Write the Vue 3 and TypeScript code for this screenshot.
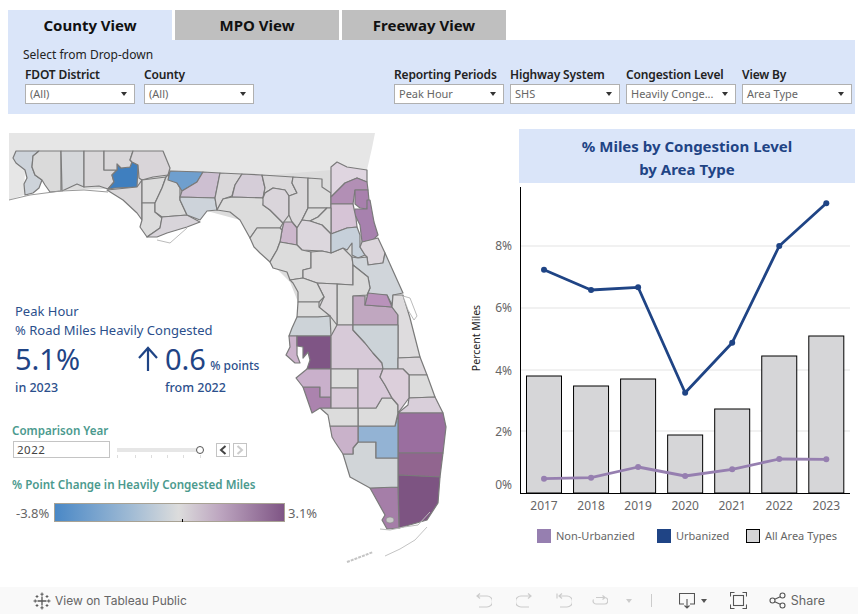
<script setup lang="ts">
import { computed } from "vue"

interface County {
  fill: string
  pts: string
}

const tabs = ["County View", "MPO View", "Freeway View"]
const leftFilters = [
  { label: "FDOT District", value: "(All)" },
  { label: "County", value: "(All)" },
]
const rightFilters = [
  { label: "Reporting Periods", value: "Peak Hour" },
  { label: "Highway System", value: "SHS" },
  { label: "Congestion Level", value: "Heavily Conge..." },
  { label: "View By", value: "Area Type" },
]

// page coordinates, read off the reference
const counties: County[] = [
  { fill: "#cdd3da", pts: "16,151 39,151 33,156 32,167 35,175 42,180 39,188 33,193 25,195 24,184 27,178 25,170 16,163 13,158" },
  { fill: "#dadada", pts: "39,151 61,151 61,191 50,192 45,185 42,180 35,175 32,167 33,156" },
  { fill: "#d5d7da", pts: "61,151 84,151 84,187 77,184 62,191" },
  { fill: "#d9d7d9", pts: "84,151 104,151 104,170 117,170 112,175 114,182 108,189 99,186 84,187" },
  { fill: "#3f7fbf", pts: "117,164 121,168 130,167 132,162 138,165 137,187 115,188 108,189 114,182 112,175 117,170" },
  { fill: "#d9d7d9", pts: "104,151 133,151 130,160 132,162 130,167 121,168 117,164 117,170 104,170" },
  { fill: "#d9d5d9", pts: "133,151 163,151 170,168 168,175 153,177 142,180 139,178 138,165 132,162 130,160" },
  { fill: "#dad8da", pts: "107,190 137,187 142,180 142,203 142,220 137,213 123,200" },
  { fill: "#dcdcdc", pts: "142,180 166,177 162,188 155,203 142,203" },
  { fill: "#dcdcdc", pts: "142,203 155,203 155,212 162,218 160,228 147,237 140,227 142,220" },
  { fill: "#dadada", pts: "166,177 168,175 177,183 180,188 180,200 187,215 162,217 155,212 155,203 162,188" },
  { fill: "#d8d4da", pts: "162,217 187,215 200,222 187,227 167,233 157,237 147,237 160,228" },
  { fill: "#6f9fce", pts: "170,171 203,172 197,182 182,191 177,183 168,180" },
  { fill: "#cdbfd1", pts: "203,172 220,173 217,188 215,198 180,197 182,191 197,182" },
  { fill: "#cdd3da", pts: "180,197 215,198 217,210 207,211 200,220 187,215 180,200" },
  { fill: "#dad8da", pts: "220,173 242,174 235,185 232,196 223,199 217,210 215,198 217,188" },
  { fill: "#d5cdd8", pts: "242,174 262,175 265,188 263,198 232,197 235,185" },
  { fill: "#dcdcdc", pts: "223,199 232,197 263,198 264,200 263,205 270,210 283,223 280,228 257,228 250,238 240,220 230,212 217,210" },
  { fill: "#dad8da", pts: "262,175 293,177 292,183 297,193 289,196 285,190 273,188 265,193 263,198 265,188" },
  { fill: "#dad5db", pts: "265,193 273,188 285,190 289,196 289,215 283,223 270,210 263,205 263,198" },
  { fill: "#dad8da", pts: "293,177 308,178 308,208 302,220 297,228 292,222 289,215 289,196 297,193 292,183" },
  { fill: "#dcdcdc", pts: "308,178 322,179 322,187 331,193 331,208 308,208" },
  { fill: "#dfd5e0", pts: "331,167 337,162 347,167 367,170 367,182 357,178 345,183 331,197" },
  { fill: "#b28fb5", pts: "331,197 345,183 357,178 367,182 368,190 355,190 353,204 331,204" },
  { fill: "#a880ad", pts: "355,190 368,190 369,200 367,209 360,208 355,204" },
  { fill: "#a781ae", pts: "355,209 367,209 367,200 370,200 374,222 378,235 373,240 362,242 360,225 354,213" },
  { fill: "#d6c4d6", pts: "331,204 353,204 356,218 357,227 347,228 331,234" },
  { fill: "#dcdcdc", pts: "302,220 308,208 327,208 318,217 310,221" },
  { fill: "#dcdcdc", pts: "310,221 318,217 327,208 331,208 331,234 322,225 313,222" },
  { fill: "#ccb7cc", pts: "284,222 292,222 297,228 297,245 280,242 282,230" },
  { fill: "#dcd7dd", pts: "297,228 302,220 310,221 322,225 331,234 331,253 322,251 302,250 297,245" },
  { fill: "#dcdcdc", pts: "250,238 257,228 280,228 282,230 280,242 277,250 270,262 260,253 254,247" },
  { fill: "#dcdcdc", pts: "280,242 297,245 302,250 311,252 311,268 303,270 303,278 290,280 287,272 273,268 270,262 277,250" },
  { fill: "#dcdadc", pts: "311,252 322,251 331,253 343,248 352,257 353,265 353,285 337,284 317,283 303,278 303,270 311,268" },
  { fill: "#c6d0da", pts: "331,234 347,228 357,227 360,235 360,247 365,255 358,258 352,255 352,243 347,250 343,248 331,253" },
  { fill: "#dcd6dc", pts: "362,242 378,238 385,253 383,263 368,265 367,257 365,255 360,247" },
  { fill: "#d0d5da", pts: "358,258 367,257 368,265 383,263 385,253 403,293 393,295 392,305 387,295 367,295 370,288 368,277 353,265 352,257" },
  { fill: "#dadada", pts: "337,284 353,285 353,265 368,277 370,288 367,295 353,296 353,325 337,325" },
  { fill: "#dcd9dc", pts: "317,283 337,284 337,325 330,316 319,308 324,297" },
  { fill: "#dcdcdc", pts: "290,280 303,278 317,283 324,297 319,302 298,302 298,292 293,283" },
  { fill: "#dcdcdc", pts: "298,302 319,302 319,307 330,316 318,317 297,317" },
  { fill: "#cdd3d8", pts: "297,317 318,317 330,316 331,336 289,336 292,328" },
  { fill: "#c0a7c0", pts: "353,296 365,296 365,305 392,307 398,315 398,325 353,325" },
  { fill: "#b992bb", pts: "365,305 368,293 387,295 392,307" },
  { fill: "#dedcde", pts: "393,295 403,295 410,318 420,357 398,358 398,315 392,307" },
  { fill: "#ccb3cc", pts: "289,336 297,336 297,355 300,363 295,363 286,355 290,347" },
  { fill: "#7f5585", pts: "297,336 331,336 331,369 307,369 310,360 308,352 303,358 303,347 297,346" },
  { fill: "#d7cad8", pts: "331,336 337,325 353,325 353,330 365,343 373,353 382,363 383,369 331,369" },
  { fill: "#ccd3d8", pts: "353,325 398,325 398,369 383,369 382,363 373,353 365,343 353,330" },
  { fill: "#dcd7dc", pts: "398,358 420,357 427,375 409,375 403,369 398,369" },
  { fill: "#dcdcdc", pts: "409,375 427,375 435,397 409,398" },
  { fill: "#d9cfda", pts: "409,398 435,397 443,413 398,413 408,405" },
  { fill: "#9a6e9f", pts: "398,413 443,413 446,427 443,453 398,453" },
  { fill: "#91658f", pts: "398,453 443,453 440,477 398,475" },
  { fill: "#7d5482", pts: "398,475 440,477 438,503 427,520 399,528" },
  { fill: "#a57ea8", pts: "370,488 398,487 399,528 387,529 382,520 385,515" },
  { fill: "#d1d5d8", pts: "343,454 353,454 353,448 358,442 376,442 376,458 398,458 398,487 370,488 350,477" },
  { fill: "#93b3d4", pts: "358,426 395,426 398,413 398,458 376,458 376,442 358,442" },
  { fill: "#dcdcdc", pts: "358,408 376,408 382,398 392,398 398,405 398,413 395,426 358,426" },
  { fill: "#c9b2ca", pts: "330,426 358,426 358,442 353,448 353,454 343,454 335,442 332,437" },
  { fill: "#dcdcdc", pts: "320,408 358,408 358,426 330,426 328,415" },
  { fill: "#ab83ae", pts: "303,387 320,387 320,397 331,397 331,408 320,408 312,413" },
  { fill: "#c9b0cb", pts: "296,378 307,369 331,369 331,397 320,397 320,387 303,387" },
  { fill: "#dcdcdc", pts: "331,369 358,369 358,388 331,388" },
  { fill: "#d8cad8", pts: "331,388 358,388 358,408 331,408" },
  { fill: "#d8c9d9", pts: "358,369 383,369 380,377 385,385 392,398 382,398 376,408 358,408" },
  { fill: "#dccfdb", pts: "383,369 403,369 409,375 409,398 398,413 398,405 392,398 385,385 380,377" },
]

const chartYears = [2017, 2018, 2019, 2020, 2021, 2022, 2023]
const yAxis = [
  { label: "8%", grid: 246, text: 246 },
  { label: "6%", grid: 308, text: 308 },
  { label: "4%", grid: 370, text: 371 },
  { label: "2%", grid: 431, text: 432 },
  { label: "0%", grid: 0, text: 485 },
]
const barTops = [376, 386, 379, 435, 409, 356, 336]
const urbanY = [269.7, 290, 287.3, 392.7, 342.7, 246, 203.3]
const nonUrbanY = [478.7, 477.7, 467, 476, 469.3, 459, 459.3]

const barX = (i: number) => 526.5 + i * 47.05
const pointX = (i: number) => 544 + i * 47.05

const urbanPts = computed(() => urbanY.map((y, i) => `${pointX(i)},${y}`).join(" "))
const nonUrbanPts = computed(() => nonUrbanY.map((y, i) => `${pointX(i)},${y}`).join(" "))

const sliderTicks = [0, 18, 34, 50, 66, 83]
</script>

<template>
  <div class="page">
    <div class="tabs">
      <div v-for="(t, i) in tabs" :key="t" class="tab" :class="{ active: i === 0 }">{{ t }}</div>
    </div>

    <div class="filters">
      <div class="select-hint">Select from Drop-down</div>
      <div class="filter-row">
        <div class="filter-group">
          <div v-for="f in leftFilters" :key="f.label" class="filter">
            <div class="filter-label">{{ f.label }}</div>
            <div class="select">
              <span>{{ f.value }}</span><i class="caret"></i>
            </div>
          </div>
        </div>
        <div class="filter-group narrow">
          <div v-for="f in rightFilters" :key="f.label" class="filter">
            <div class="filter-label">{{ f.label }}</div>
            <div class="select">
              <span>{{ f.value }}</span><i class="caret"></i>
            </div>
          </div>
        </div>
      </div>
    </div>

    <div class="body">
      <div class="left">
        <svg class="map" width="470" height="450" viewBox="0 120 470 450">
          <polygon
            points="9,133 375,133 372,148 367,170 332,195 250,176 170,171 163,151 16,151 13,158 25,170 24,195 9,200"
            fill="#e6e6e6"
          />
          <polygon
            points="61,152 163,152 170,170 256,176 332,170 360,240 395,300 398,470 345,452 335,440 331,410 331,340 298,302 290,282 270,262 256,240 240,220 207,211 187,215 160,228 142,210 123,198 107,189 61,190"
            fill="#dcdcdc"
          />
          <polygon
            v-for="(c, i) in counties"
            :key="i"
            :points="c.pts"
            :fill="c.fill"
            stroke="#7a7a7a"
            stroke-width="1.2"
            stroke-linejoin="round"
          />
          <polyline points="9,200 30,195 61,191 84,190 108,192" fill="none" stroke="#999" stroke-width="1" />
          <polygon points="403,296 410,298 417,316 414,320 408,310" fill="#fff" stroke="#aaa" stroke-width="0.8" />
          <polyline points="157,240 170,243 187,228" fill="none" stroke="#bbb" stroke-width="1" />
          <polyline points="380,529 390,530 404,527 418,525 430,512" fill="none" stroke="#bbb" stroke-width="1" />
          <polyline points="385,556 400,549 415,540 427,527" fill="none" stroke="#c4c4c4" stroke-width="1" />
          <polyline points="347,562 355,559 368,554 373,552" fill="none" stroke="#c4c4c4" stroke-width="2" stroke-dasharray="3 1" />
          <ellipse cx="390" cy="520" rx="4" ry="3" fill="#c8c8c8" stroke="#888" stroke-width="0.6" />
        </svg>

        <div class="kpi-title">
          <div>Peak Hour</div>
          <div>% Road Miles Heavily Congested</div>
        </div>
        <div class="kpi-row">
          <div class="kpi-current">
            <div class="kpi-num">5.1%</div>
            <div class="kpi-sub">in 2023</div>
          </div>
          <svg class="kpi-arrow" width="24" height="26" viewBox="0 0 24 26">
            <path d="M12 25V2M3 12 12 2l9 10" fill="none" stroke="#1f4485" stroke-width="2.2" />
          </svg>
          <div class="kpi-change">
            <div><span class="kpi-num">0.6</span> <span class="kpi-unit">% points</span></div>
            <div class="kpi-sub">from 2022</div>
          </div>
        </div>

        <div class="teal-title year-title">Comparison Year</div>
        <div class="year-row">
          <div class="year-select">2022</div>
          <div class="slider">
            <div class="track"></div>
            <div class="knob"></div>
            <i v-for="t in sliderTicks" :key="t" class="tick" :style="{ left: t + 'px' }"></i>
          </div>
          <div class="step">
            <svg width="8" height="10" viewBox="0 0 8 10"><path d="M6.5 1 2 5l4.500 4" fill="none" stroke="#444" stroke-width="2" /></svg>
          </div>
          <div class="step off">
            <svg width="8" height="10" viewBox="0 0 8 10"><path d="M1.500 1 6 5 1.500 9" fill="none" stroke="#ccc" stroke-width="2" /></svg>
          </div>
        </div>

        <div class="teal-title legend-title">% Point Change in Heavily Congested Miles</div>
        <div class="color-legend">
          <span class="range-label low">-3.8%</span>
          <div class="ramp"><i class="ramp-zero"></i></div>
          <span class="range-label">3.1%</span>
        </div>
      </div>

      <div class="right">
        <div class="chart-title">% Miles by Congestion Level<br />by Area Type</div>
        <svg class="chart" width="389" height="336" viewBox="469 183 389 336">
          <g v-for="a in yAxis" :key="a.label">
            <line v-if="a.grid" x1="521" :y1="a.grid" x2="850" :y2="a.grid" stroke="#e3e3e3" stroke-width="1" />
            <text x="512" :y="a.text + 4" text-anchor="end" class="tick-text">{{ a.label }}</text>
          </g>
          <rect
            v-for="(top, i) in barTops"
            :key="i"
            :x="barX(i)"
            :y="top"
            width="35"
            :height="493 - top"
            fill="#d4d4d6"
            fill-opacity="0.96"
            stroke="#000"
            stroke-width="1"
          />
          <line x1="520.500" y1="187" x2="520.500" y2="494" stroke="#000" stroke-width="1" />
          <line x1="520" y1="493.500" x2="850" y2="493.500" stroke="#000" stroke-width="1" />
          <polyline :points="urbanPts" fill="none" stroke="#1f4485" stroke-width="2.8" stroke-linejoin="round" />
          <circle v-for="(y, i) in urbanY" :key="'u' + i" :cx="pointX(i)" :cy="y" r="3" fill="#1f4485" />
          <polyline :points="nonUrbanPts" fill="none" stroke="#967fb0" stroke-width="2.8" stroke-linejoin="round" />
          <circle v-for="(y, i) in nonUrbanY" :key="'n' + i" :cx="pointX(i)" :cy="y" r="3" fill="#967fb0" />
          <text
            v-for="(yr, i) in chartYears"
            :key="yr"
            :x="pointX(i)"
            y="510"
            text-anchor="middle"
            class="tick-text"
          >{{ yr }}</text>
        </svg>
        <div class="axis-title">Percent Miles</div>
        <div class="chart-legend">
          <div class="legend-item w1"><i class="swatch purple"></i>Non-Urbanzied</div>
          <div class="legend-item w2"><i class="swatch navy"></i>Urbanized</div>
          <div class="legend-item"><i class="swatch grey"></i>All Area Types</div>
        </div>
      </div>
    </div>

    <div class="toolbar">
      <div class="tb-left">
        <svg width="18" height="18" viewBox="0 0 18 18" stroke="#555" fill="none">
          <path d="M9 4.500v9M4.500 9h9" stroke-width="1.300" />
          <path d="M9 .5v3.500M7.400 2.200h3.200M9 14v3.500M7.400 15.800h3.200M.5 9H4M2.200 7.400v3.200M14 9h3.500M15.800 7.400v3.200" stroke-width="1" />
          <path d="M4 3v3M2.600 4.500h2.800M14 3v3M12.600 4.500h2.800M4 12v3M2.600 13.500h2.800M14 12v3M12.600 13.500h2.800" stroke-width="0.900" />
        </svg>
        <span>View on Tableau Public</span>
      </div>
      <div class="tb-right">
        <svg class="tb-off" width="16" height="16" viewBox="0 0 16 16" fill="none" stroke="#ccc" stroke-width="1.200">
          <path d="M1 3h10a4.500 4.500 0 0 1 0 11H3M4 .5 1 3l3 2.500" />
        </svg>
        <svg class="tb-off gap-redo" width="16" height="16" viewBox="0 0 16 16" fill="none" stroke="#ccc" stroke-width="1.200">
          <path d="M15 3H5a4.500 4.500 0 0 0 0 11h8M12 .5 15 3l-3 2.500" />
        </svg>
        <svg class="tb-off gap-redo" width="16" height="16" viewBox="0 0 16 16" fill="none" stroke="#ccc" stroke-width="1.200">
          <path d="M1 .5v5M3 3h8a4.500 4.500 0 0 1 0 11H4M6 .5 3 3l3 2.500" />
        </svg>
        <svg class="tb-off gap-refresh" width="16" height="16" viewBox="0 0 16 16" fill="none" stroke="#ccc" stroke-width="1.200">
          <path d="M4 4.500h8.500a3 3 0 0 1 0 6.500H4a3 3 0 0 1-2.500-4.500M10.500 2.500l2.500 2-2.500 2" />
        </svg>
        <i class="tb-caret off"></i>
        <i class="tb-sep"></i>
        <svg class="gap-dl" width="16" height="18" viewBox="0 0 16 18" fill="none" stroke="#555" stroke-width="1.100">
          <path d="M5 12H.5V1.500h15V12H11M8 7v9M5.500 13.500 8 16l2.500-2.500" />
        </svg>
        <i class="tb-caret"></i>
        <svg class="gap-full" width="17" height="17" viewBox="0 0 17 17" fill="none" stroke="#555" stroke-width="1.100">
          <path d="M.5 4.500v-4h4M12.500.5h4v4M16.500 12.500v4h-4M4.500 16.500h-4v-4" />
          <rect x="3.500" y="3.500" width="10" height="10" />
        </svg>
        <svg class="gap-share" width="17" height="17" viewBox="0 0 17 17" fill="none" stroke="#555" stroke-width="1.100">
          <circle cx="3.500" cy="8.500" r="2.500" />
          <circle cx="13.500" cy="3.500" r="2.500" />
          <circle cx="13.500" cy="13.500" r="2.500" />
          <path d="M5.700 7.300 11.300 4.700M5.700 9.700l5.600 2.600" />
        </svg>
        <span class="share">Share</span>
      </div>
    </div>
  </div>
</template>

<style scoped>
.page {
  width: 858px;
  height: 614px;
  overflow: hidden;
  display: flex;
  flex-direction: column;
  background: #fff;
  font-family: "Noto Sans", sans-serif;
  color: #333;
}
.tabs {
  display: flex;
  gap: 3px;
  margin: 10px 0 0 8px;
}
.tab {
  width: 164px;
  height: 30px;
  line-height: 31px;
  text-align: center;
  background: #bfbfbf;
  font-size: 15px;
  font-weight: 700;
  color: #111;
}
.tab.active {
  background: #dae5f9;
}
.filters {
  margin-left: 8px;
  width: 847px;
  height: 74px;
  box-sizing: border-box;
  padding: 7px 3px 0 15px;
  background: #dae5f9;
}
.select-hint {
  font-size: 12px;
  line-height: 16px;
  color: #222;
}
.filter-row {
  display: flex;
  justify-content: space-between;
  margin-top: 4px;
  padding-left: 2px;
}
.filter-group {
  display: flex;
  gap: 9px;
}
.filter-group.narrow {
  gap: 6px;
}
.filter {
  width: 110px;
}
.filter-label {
  font-size: 12px;
  font-weight: 600;
  line-height: 16px;
  letter-spacing: -0.15px;
  color: #222;
  white-space: nowrap;
}
.select {
  height: 20px;
  margin-top: 1px;
  box-sizing: border-box;
  border: 1px solid #b0b0b0;
  background: #fff;
  display: flex;
  align-items: center;
  justify-content: space-between;
  padding: 0 7px 1px 4px;
  font-size: 11px;
  color: #666;
  white-space: nowrap;
}
.caret {
  width: 0;
  height: 0;
  border-left: 3.500px solid transparent;
  border-right: 3.500px solid transparent;
  border-top: 4.500px solid #333;
}
.body {
  flex: 1;
  display: flex;
  min-height: 0;
  margin-top: 15px;
}
.left {
  position: relative;
  width: 519px;
  padding: 173px 0 0 15px;
  box-sizing: border-box;
}
.map {
  position: absolute;
  left: 0;
  top: -9px;
}
.kpi-title {
  position: relative;
  font-size: 13px;
  line-height: 19px;
  color: #2b4f8c;
}
.kpi-row {
  position: relative;
  display: flex;
  align-items: flex-start;
  margin-top: 0;
}
.kpi-current {
  width: 121px;
}
.kpi-num {
  font-size: 29px;
  line-height: 38px;
  color: #1f4485;
}
.kpi-sub {
  font-size: 12.500px;
  line-height: 18px;
  font-weight: 500;
  color: #2b4f8c;
  margin-top: 1px;
}
.kpi-arrow {
  margin: 6px 5px 0 0;
}
.kpi-unit {
  font-size: 12px;
  font-weight: 500;
  color: #2b4f8c;
}
.teal-title {
  position: relative;
  margin-left: -3px;
  font-size: 11.600px;
  font-weight: 600;
  line-height: 16px;
  color: #4b9a8e;
}
.year-title {
  margin-top: 26px;
}
.year-row {
  position: relative;
  display: flex;
  align-items: center;
  margin: 2px 0 0 -2px;
}
.year-select {
  width: 97px;
  height: 17px;
  box-sizing: border-box;
  border: 1px solid #c4c4c4;
  background: #fff;
  padding-left: 3px;
  font-size: 11.500px;
  line-height: 15px;
  letter-spacing: 0.5px;
  color: #444;
}
.slider {
  position: relative;
  width: 83px;
  height: 17px;
  margin: 0 16px 0 7px;
}
.track {
  position: absolute;
  left: 0;
  right: 0;
  top: 7px;
  height: 4px;
  background: #e6e6e6;
}
.knob {
  position: absolute;
  right: -4px;
  top: 5px;
  width: 6px;
  height: 6px;
  border: 1.500px solid #555;
  border-radius: 50%;
  background: #fff;
}
.tick {
  position: absolute;
  top: 14px;
  width: 1px;
  height: 3px;
  background: #ddd;
}
.step {
  width: 14px;
  height: 14px;
  box-sizing: border-box;
  border: 1px solid #c4c4c4;
  margin-right: 3px;
  display: flex;
  align-items: center;
  justify-content: center;
}
.legend-title {
  margin-top: 19px;
}
.color-legend {
  position: relative;
  display: flex;
  align-items: center;
  gap: 3px;
  margin: 10px 0 0 1px;
}
.range-label {
  font-size: 13px;
  color: #666;
}
.range-label.low {
  width: 35px;
}
.ramp {
  position: relative;
  width: 231px;
  height: 19px;
  box-sizing: border-box;
  border: 1px solid #a8a294;
  background: linear-gradient(to right, #4a88c6, #9db9d4 32%, #dcdcdc 54%, #bda6c0 72%, #7f5585);
}
.ramp-zero {
  position: absolute;
  left: 127px;
  bottom: -1px;
  width: 1px;
  height: 3px;
  background: #000;
}
.right {
  position: relative;
  width: 339px;
}
.chart-title {
  width: 336px;
  height: 54px;
  background: #dae5f9;
  padding-top: 6px;
  box-sizing: border-box;
  text-align: center;
  font-size: 15px;
  font-weight: 700;
  line-height: 23px;
  color: #1f4485;
}
.chart {
  display: block;
  margin-left: -50px;
}
.tick-text {
  font-family: "Noto Sans", sans-serif;
  font-size: 12px;
  fill: #666;
}
.axis-title {
  position: absolute;
  left: -79px;
  top: 202px;
  width: 72px;
  text-align: center;
  transform: rotate(-90deg);
  font-size: 10.500px;
  line-height: 14px;
  color: #222;
  white-space: nowrap;
}
.chart-legend {
  display: flex;
  margin: 9px 0 0 18px;
}
.legend-item {
  display: flex;
  align-items: center;
  gap: 5px;
  font-size: 11px;
  color: #666;
  white-space: nowrap;
}
.legend-item.w1 {
  width: 120px;
}
.legend-item.w2 {
  width: 89px;
}
.swatch {
  width: 14px;
  height: 14px;
  box-sizing: border-box;
}
.swatch.purple {
  background: #967fb0;
}
.swatch.navy {
  background: #1f4485;
}
.swatch.grey {
  background: #d4d4d6;
  border: 1px solid #000;
}
.toolbar {
  height: 27px;
  flex: none;
  background: #f9f9f9;
  display: flex;
  align-items: center;
  justify-content: space-between;
  padding: 0 33px;
  font-family: Inter, sans-serif;
  font-size: 12px;
  color: #666;
}
.tb-left {
  display: flex;
  align-items: center;
  gap: 4px;
}
.tb-right {
  display: flex;
  align-items: center;
}
.gap-redo {
  margin-left: 24px;
}
.gap-refresh {
  margin-left: 20px;
}
.tb-caret {
  width: 0;
  height: 0;
  margin-left: 18px;
  border-left: 3.500px solid transparent;
  border-right: 3.500px solid transparent;
  border-top: 4.500px solid #555;
}
.tb-caret.off {
  border-top-color: #ccc;
}
.tb-sep {
  width: 1px;
  height: 13px;
  margin-left: 19px;
  background: #ccc;
}
.gap-dl {
  margin-left: 27px;
}
.gap-dl + .tb-caret {
  margin-left: 6px;
}
.gap-full {
  margin-left: 23px;
}
.gap-share {
  margin-left: 22px;
}
.share {
  margin-left: 5px;
  font-size: 12.500px;
}
</style>

<style>
html,
body {
  margin: 0;
  background: #fff;
}
</style>
